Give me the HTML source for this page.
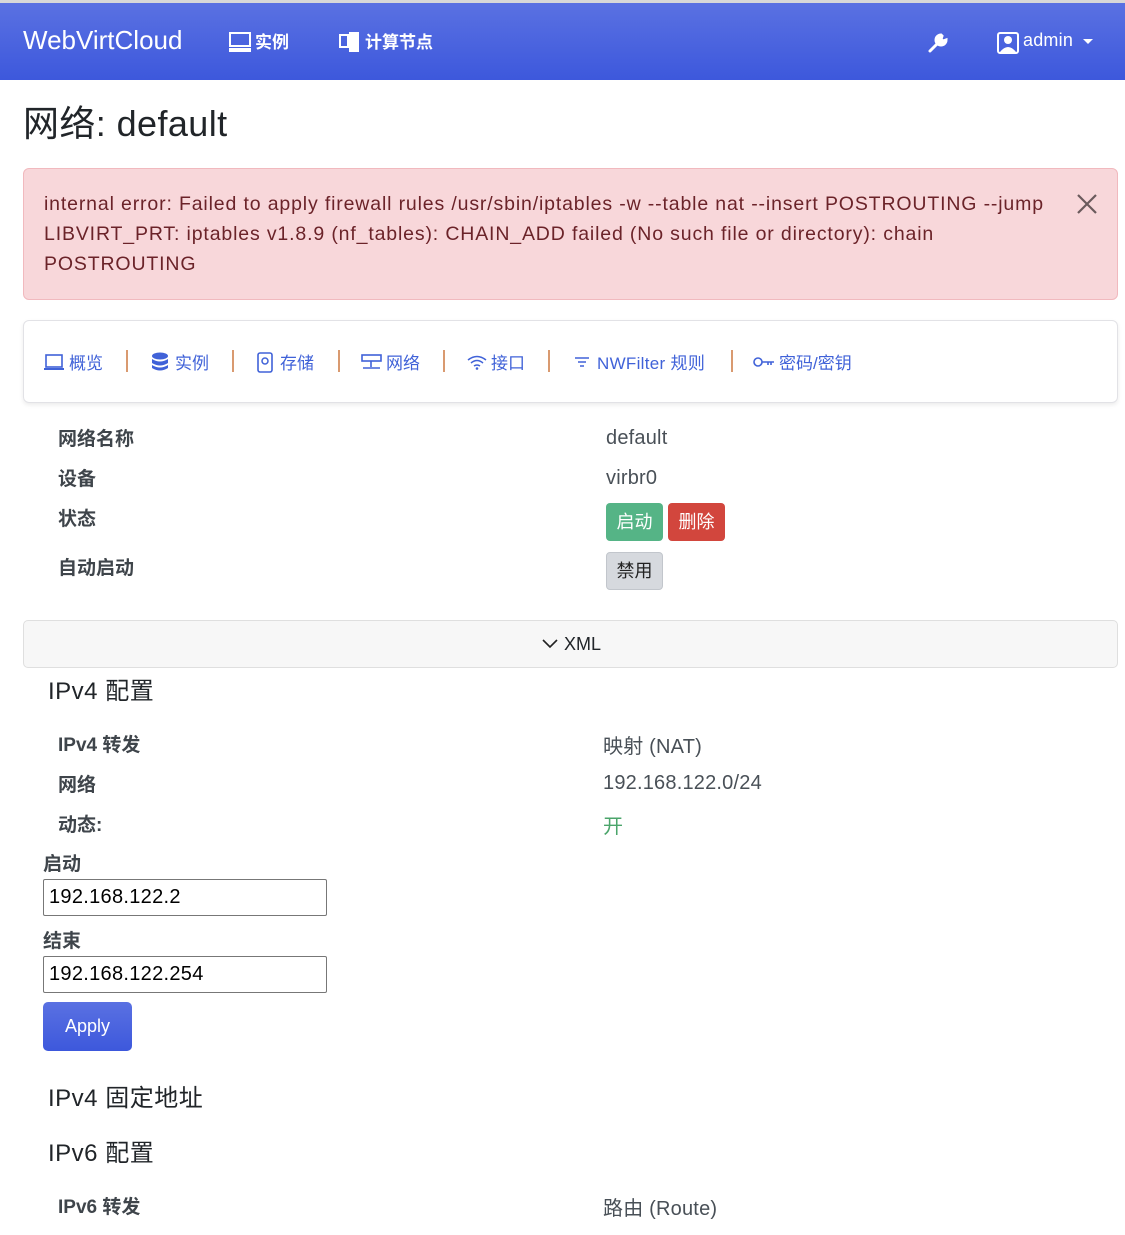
<!DOCTYPE html>
<html><head><meta charset="utf-8"><style>
*{box-sizing:border-box;margin:0;padding:0}
body{width:1125px;height:1235px;overflow:hidden;background:#fff;font-family:"Liberation Sans","Noto Sans CJK SC",sans-serif;color:#212529;position:relative}
.a{position:absolute;white-space:nowrap}
.nav{position:absolute;left:0;top:3px;width:1125px;height:77px;background:linear-gradient(#5a71e2,#3d58dc);border-top:0}
.topline{position:absolute;left:0;top:0;width:1125px;height:3px;background:#d8d8d8}
.w{color:#fff}
.lbl{font-weight:bold;font-size:19px;color:#3f454b}
.val{font-size:20px;color:#495057;letter-spacing:.2px}
.navl{color:#4062d8;font-size:17px}
.sep{position:absolute;top:350px;width:2px;height:22px;background:#d99a70}
.btn{position:absolute;height:38px;border-radius:4px;font-size:18px;text-align:center;line-height:38px}
input{position:absolute;left:43px;width:284px;height:37px;border:1px solid #777;border-radius:2px;font-family:"Liberation Sans",sans-serif;font-size:20px;padding-left:5px;color:#000}
.h{font-size:24px;letter-spacing:.5px}
</style></head><body>
<div class="topline"></div>
<div class="nav"></div>
<div class="a w" style="left:23px;top:25px;font-size:26px">WebVirtCloud</div>
<svg class="a" style="left:229px;top:32px" width="22" height="21" viewBox="0 0 22 21"><rect x="1" y="1" width="20" height="13" fill="none" stroke="#fff" stroke-width="2"/><rect x="0" y="16" width="22" height="4" fill="#fff"/></svg>
<div class="a w" style="left:255px;top:28px;font-size:17px;font-weight:bold">实例</div>
<svg class="a" style="left:339px;top:31px" width="22" height="22" viewBox="0 0 22 22"><rect x="1" y="4" width="8" height="12" fill="none" stroke="#fff" stroke-width="2"/><rect x="10" y="1" width="10" height="20" fill="#fff"/></svg>
<div class="a w" style="left:365px;top:28px;font-size:17px;font-weight:bold">计算节点</div>
<svg class="a" style="left:927px;top:32px" width="22" height="22" viewBox="0 0 22 22"><path d="M3 19 L12 10 M14 3 a5 5 0 1 0 5 5 l-3 1 -2 -2 1 -3z" stroke="#fff" stroke-width="3" fill="#fff" stroke-linecap="round"/></svg>
<svg class="a" style="left:997px;top:32px" width="22" height="22" viewBox="0 0 22 22"><rect x="1" y="1" width="20" height="20" rx="2" fill="none" stroke="#fff" stroke-width="2"/><circle cx="11" cy="8" r="4" fill="#fff"/><path d="M3 20 q8 -10 16 0z" fill="#fff"/></svg>
<div class="a w" style="left:1023px;top:30px;font-size:18px;letter-spacing:.2px">admin</div>
<div class="a" style="left:1083px;top:39px;border:5px solid transparent;border-top:5px solid #fff"></div>

<div class="a" style="left:23px;top:95px;font-size:36px;letter-spacing:.4px">网络: default</div>

<div class="a" style="left:23px;top:168px;width:1095px;height:132px;background:#f8d7da;border:1px solid #f1b9be;border-radius:6px"></div>
<div class="a" style="left:44px;top:189px;font-size:19.5px;line-height:30px;color:#6b2329;white-space:normal;width:1020px;letter-spacing:.85px">internal error: Failed to apply firewall rules /usr/sbin/iptables -w --table nat --insert POSTROUTING --jump LIBVIRT_PRT: iptables v1.8.9 (nf_tables): CHAIN_ADD failed (No such file or directory): chain POSTROUTING</div>
<svg class="a" style="left:1077px;top:194px" width="20" height="20" viewBox="0 0 20 20"><path d="M1 1L19 19M19 1L1 19" stroke="#6a5a5c" stroke-width="2.2"/></svg>

<div class="a" style="left:23px;top:320px;width:1095px;height:83px;border:1px solid #e2e2e6;border-radius:6px;box-shadow:0 2px 4px rgba(0,0,0,.08)"></div>
<svg class="a" style="left:44px;top:354px" width="20" height="17" viewBox="0 0 20 17"><rect x="2" y="1" width="16" height="12" fill="none" stroke="#4062d8" stroke-width="1.6"/><rect x="0" y="14" width="20" height="2" fill="#4062d8"/></svg>
<div class="a navl" style="left:69px;top:349px">概览</div>
<div class="sep" style="left:126px"></div>
<svg class="a" style="left:151px;top:352px" width="18" height="20" viewBox="0 0 18 20"><ellipse cx="9" cy="4" rx="8" ry="3.5" fill="#4062d8"/><path d="M1 7 q8 5 16 0v4q-8 5 -16 0z M1 13 q8 5 16 0v3q-8 5 -16 0z" fill="#4062d8"/></svg>
<div class="a navl" style="left:175px;top:349px">实例</div>
<div class="sep" style="left:232px"></div>
<svg class="a" style="left:257px;top:352px" width="16" height="21" viewBox="0 0 16 21"><rect x="1" y="1" width="14" height="19" rx="2" fill="none" stroke="#4062d8" stroke-width="1.6"/><circle cx="8" cy="9" r="3" fill="none" stroke="#4062d8" stroke-width="1.5"/></svg>
<div class="a navl" style="left:280px;top:349px">存储</div>
<div class="sep" style="left:338px"></div>
<svg class="a" style="left:361px;top:354px" width="21" height="17" viewBox="0 0 21 17"><rect x="1" y="1" width="19" height="6" fill="none" stroke="#4062d8" stroke-width="1.6"/><path d="M10 7v6M2 14h17" stroke="#4062d8" stroke-width="1.6"/></svg>
<div class="a navl" style="left:386px;top:349px">网络</div>
<div class="sep" style="left:443px"></div>
<svg class="a" style="left:467px;top:354px" width="20" height="16" viewBox="0 0 20 16"><path d="M1 6q9-7 18 0M4 9q6-5 12 0M7 12q3-2 6 0" fill="none" stroke="#4062d8" stroke-width="1.5"/><circle cx="10" cy="14.5" r="1.3" fill="#4062d8"/></svg>
<div class="a navl" style="left:491px;top:349px">接口</div>
<div class="sep" style="left:548px"></div>
<svg class="a" style="left:574px;top:356px" width="16" height="12" viewBox="0 0 16 12"><path d="M1 2h14M4 6h8M6 10h4" stroke="#4062d8" stroke-width="1.5"/></svg>
<div class="a navl" style="left:597px;top:349px;letter-spacing:.3px">NWFilter 规则</div>
<div class="sep" style="left:731px"></div>
<svg class="a" style="left:753px;top:355px" width="22" height="14" viewBox="0 0 22 14"><circle cx="5" cy="7" r="4" fill="none" stroke="#4062d8" stroke-width="1.6"/><path d="M9 7h12M15 7v3M18 7v3" stroke="#4062d8" stroke-width="1.6"/></svg>
<div class="a navl" style="left:779px;top:349px">密码/密钥</div>

<div class="a lbl" style="left:58px;top:424px">网络名称</div>
<div class="a val" style="left:606px;top:427px">default</div>
<div class="a lbl" style="left:58px;top:464px">设备</div>
<div class="a val" style="left:606px;top:467px">virbr0</div>
<div class="a lbl" style="left:58px;top:504px">状态</div>
<div class="btn" style="left:606px;top:503px;width:57px;background:#55b486;color:#fff">启动</div>
<div class="btn" style="left:668px;top:503px;width:57px;background:#d2463d;color:#fff">删除</div>
<div class="a lbl" style="left:58px;top:553px">自动启动</div>
<div class="btn" style="left:606px;top:552px;width:57px;background:#d6d9de;border:1px solid #c2c6cc;color:#222;line-height:36px">禁用</div>

<div class="a" style="left:23px;top:620px;width:1095px;height:48px;background:#f7f7f7;border:1px solid #dfdfdf;border-radius:5px"></div>
<svg class="a" style="left:542px;top:639px" width="16" height="10" viewBox="0 0 16 10"><path d="M1 1l7 7 7-7" fill="none" stroke="#222" stroke-width="1.6"/></svg>
<div class="a" style="left:564px;top:634px;font-size:18px">XML</div>

<div class="a h" style="left:48px;top:671px">IPv4 配置</div>
<div class="a lbl" style="left:58px;top:730px">IPv4 转发</div>
<div class="a val" style="left:603px;top:730px">映射 (NAT)</div>
<div class="a lbl" style="left:58px;top:770px">网络</div>
<div class="a val" style="left:603px;top:772px">192.168.122.0/24</div>
<div class="a lbl" style="left:58px;top:810px">动态:</div>
<div class="a val" style="left:603px;top:810px;color:#4ba56b">开</div>
<div class="a lbl" style="left:43px;top:849px">启动</div>
<input style="top:879px;letter-spacing:.3px" value="192.168.122.2">
<div class="a lbl" style="left:43px;top:926px">结束</div>
<input style="top:956px;letter-spacing:.3px" value="192.168.122.254">
<div class="btn" style="left:43px;top:1002px;width:89px;height:49px;line-height:49px;background:linear-gradient(#5a71e2,#3d58dc);color:#fff;border-radius:5px">Apply</div>

<div class="a h" style="left:48px;top:1078px">IPv4 固定地址</div>
<div class="a h" style="left:48px;top:1133px">IPv6 配置</div>
<div class="a lbl" style="left:58px;top:1192px">IPv6 转发</div>
<div class="a val" style="left:603px;top:1192px">路由 (Route)</div>
</body></html>
